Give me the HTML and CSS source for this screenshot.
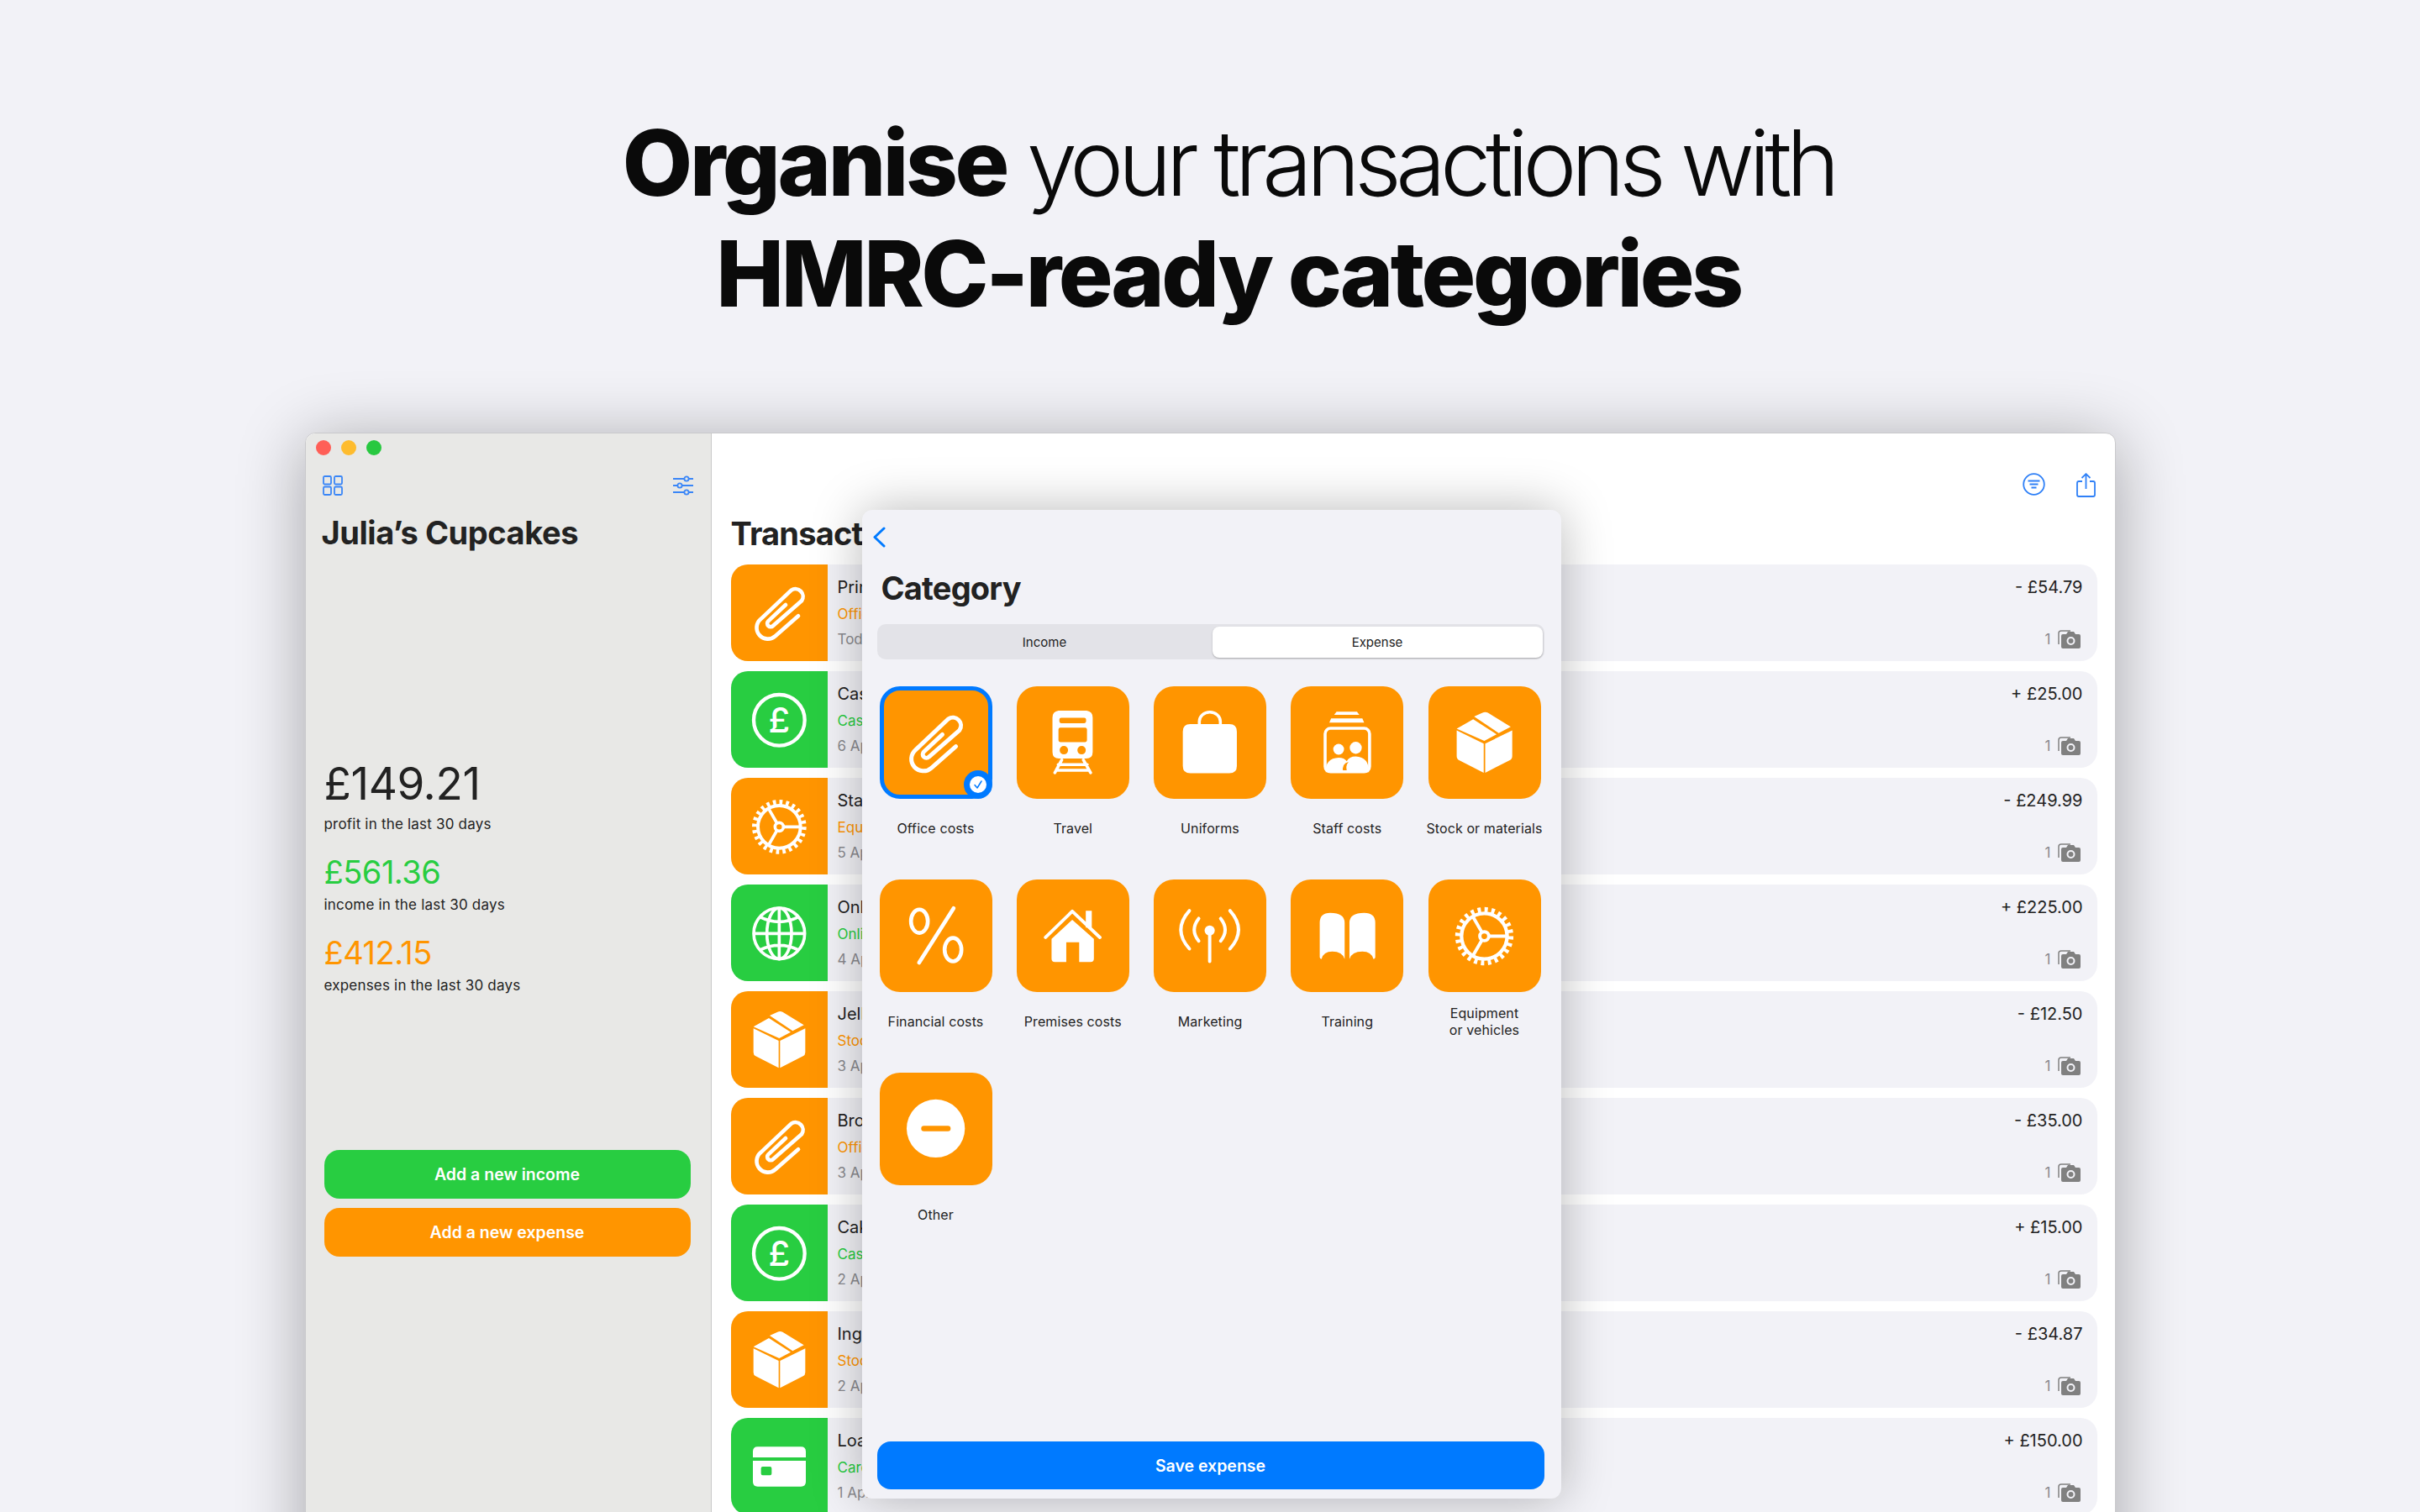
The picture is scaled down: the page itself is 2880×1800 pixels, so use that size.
FILE: index.html
```html
<!DOCTYPE html>
<html lang="en">
  <head>
    <meta charset="UTF-8" />
    <title>Organise your transactions</title>
    <link rel="stylesheet" href="styles.css">
  </head>
  <body>
    <svg class="icon-defs" aria-hidden="true">
      <symbol id="i-clip" viewBox="0 0 345 345">
        <path fill="none" stroke="#fff" stroke-width="14" stroke-linecap="round" stroke-linejoin="round" d="M240 184L158 256A38 38 0 0 1 105 196L215 92A27 27 0 0 1 252 130L150 219A12 12 0 0 1 133 202L195 144" />
      </symbol>
      <symbol id="i-pound" viewBox="0 0 345 345">
        <circle cx="172" cy="175" r="91" fill="none" stroke="#fff" stroke-width="13" />
        <text x="172" y="220" text-anchor="middle" class="icon-glyph">£</text>
      </symbol>
      <symbol id="i-gear" viewBox="0 0 345 345">
        <g fill="none" stroke="#fff">
          <circle cx="172" cy="175" r="76" stroke-width="12" />
          <circle cx="172" cy="175" r="88" stroke-width="18" stroke-dasharray="11 12.04" />
          <circle cx="172" cy="175" r="15" stroke-width="11" />
          <path stroke-width="11" d="M187 175H250M164 162L134 110M164 188L134 240" />
        </g>
      </symbol>
      <symbol id="i-globe" viewBox="0 0 345 345">
        <g fill="none" stroke="#fff" stroke-width="11">
          <circle cx="172" cy="175" r="91" />
          <ellipse cx="172" cy="175" rx="44" ry="91" />
          <path d="M172 84V266M81 175H263M103 116Q172 150 241 116M103 234Q172 200 241 234" />
        </g>
      </symbol>
      <symbol id="i-box" viewBox="0 0 345 345">
        <path fill="#fff" d="M80 133L170 177V274L88 232Q80 228 80 218ZM265 133L175 177V274L257 232Q265 228 265 218ZM80 127L135 96L213 146L172 168ZM138 87L166 74Q175 70 184 74L260 121L220 142Z" />
      </symbol>
      <symbol id="i-card" viewBox="0 0 345 345">
        <path fill="#fff" fill-rule="evenodd" d="M95 103H250Q267 103 267 120V141H78V120Q78 103 95 103ZM78 153H267V228Q267 245 250 245H95Q78 245 78 228ZM113 174Q107 174 107 180V199Q107 205 113 205H139Q145 205 145 199V180Q145 174 139 174Z" />
      </symbol>
      <symbol id="i-train" viewBox="0 0 345 345">
        <path fill="#fff" fill-rule="evenodd" d="M125 67H219Q239 70 239 90V205Q239 227 217 227H127Q105 227 105 205V90Q105 70 125 67ZM134 91Q128 91 128 97V103Q128 109 134 109H211Q217 109 217 103V97Q217 91 211 91ZM131 124Q125 124 125 130V166Q125 172 131 172H214Q220 172 220 166V130Q220 124 214 124ZM143 185A14 14 0 1 0 143 213A14 14 0 1 0 143 185ZM202 185A14 14 0 1 0 202 213A14 14 0 1 0 202 185Z" />
        <path fill="none" stroke="#fff" stroke-width="10" stroke-linecap="round" d="M136 231L113 274M208 231L232 274M124 247H221M117 266H228" />
      </symbol>
      <symbol id="i-bag" viewBox="0 0 345 345">
        <path fill="#fff" d="M108 112H238Q263 112 263 137V251Q263 276 238 276H108Q83 276 83 251V137Q83 112 108 112Z" />
        <path fill="none" stroke="#fff" stroke-width="10" d="M138 115V103A35 31 0 0 1 208 103V115" />
      </symbol>
      <symbol id="i-staff" viewBox="0 0 345 345">
        <path fill="#fff" d="M136 71H204L212 81H128ZM118 93H222L228 107H112Z" />
        <rect x="98" y="126" width="148" height="145" rx="18" fill="none" stroke="#fff" stroke-width="10" />
        <circle cx="143" cy="196" r="18" fill="#fff" />
        <circle cx="200" cy="191" r="20" fill="#fff" />
        <path fill="#fff" d="M100 272Q98 226 143 224Q162 224 170 236Q178 220 200 220Q244 222 244 272H172Q164 252 176 238Q152 244 158 272Z" />
      </symbol>
      <symbol id="i-percent" viewBox="0 0 345 345">
        <g fill="none" stroke="#fff" stroke-width="13" stroke-linecap="round">
          <ellipse cx="118" cy="125" rx="28" ry="39" />
          <ellipse cx="230" cy="220" rx="28" ry="39" />
          <path d="M232 82L117 263" />
        </g>
      </symbol>
      <symbol id="i-house" viewBox="0 0 345 345">
        <path fill="#fff" d="M216 90H236V146H216ZM171 120L243 184V250Q243 261 232 261H194V195H151V261H113Q102 261 102 250V184Z" />
        <path fill="none" stroke="#fff" stroke-width="11" stroke-linecap="round" stroke-linejoin="round" d="M82 179L171 92L263 179" />
      </symbol>
      <symbol id="i-antenna" viewBox="0 0 345 345">
        <circle cx="172.500" cy="156" r="17" fill="#fff" />
        <path fill="none" stroke="#fff" stroke-width="11" stroke-linecap="round" d="M172.500 160V259M136 116Q106 154 136 191M209 116Q239 154 209 191M105 90Q48 154 105 217M240 90Q297 154 240 217" />
      </symbol>
      <symbol id="i-book" viewBox="0 0 345 345">
        <path fill="#fff" d="M80 130Q80 97 115 97Q163 97 163 130V251Q155 226 122 226Q92 226 86 251Q80 251 80 245ZM265 130Q265 97 228 97Q179 97 179 130V251Q187 226 222 226Q252 226 259 251Q265 251 265 245Z" />
      </symbol>
      <symbol id="i-minus" viewBox="0 0 345 345">
        <circle cx="172.500" cy="172" r="97" fill="#fff" />
        <rect x="124" y="163" width="98" height="18" rx="9" fill="#ff9500" />
      </symbol>
      <symbol id="i-camera" viewBox="0 0 27 22">
        <path fill="none" stroke="#808080" stroke-width="1.500" d="M1 17V4Q1 1 4 1H15" />
        <path fill="#808080" fill-rule="evenodd" d="M6 5H10L12 2H19L21 5H25Q27 5 27 7V20Q27 22 25 22H6Q4 22 4 20V7Q4 5 6 5ZM15.500 8A5 5 0 1 0 15.500 18A5 5 0 1 0 15.500 8ZM15.500 10A3 3 0 1 1 15.500 16A3 3 0 1 1 15.500 10Z" />
      </symbol>
    </svg>

    <h1 class="headline">
      <b>Organise</b> your transactions with<br />
      <b>HMRC-ready categories</b>
    </h1>

    <div class="window">
      <aside class="sidebar">
        <div class="lights">
          <span class="light light-red"></span>
          <span class="light light-yellow"></span>
          <span class="light light-green"></span>
        </div>
        <div class="side-tools">
          <svg width="24" height="24" viewBox="0 0 24 24" fill="none" stroke="#3a86f7" stroke-width="1.800">
            <rect x="1" y="1" width="9" height="9.500" rx="1.500" />
            <rect x="14" y="1" width="9" height="9.500" rx="1.500" />
            <rect x="1" y="13.500" width="9" height="9.500" rx="1.500" />
            <rect x="14" y="13.500" width="9" height="9.500" rx="1.500" />
          </svg>
          <svg width="26" height="24" viewBox="0 0 26 24" fill="none" stroke="#3a86f7" stroke-width="1.800">
            <path d="M1 4H14M20 4H25M1 12H6M12 12H25M1 20H14M20 20H25" />
            <circle cx="17" cy="4" r="2.600" />
            <circle cx="9" cy="12" r="2.600" />
            <circle cx="17" cy="20" r="2.600" />
          </svg>
        </div>
        <h2 class="side-title">Julia’s Cupcakes</h2>

        <div class="summary">
          <p class="sum-big">£149.21</p>
          <p class="sum-note">profit in the last 30 days</p>
          <p class="sum-mid sum-income">£561.36</p>
          <p class="sum-note">income in the last 30 days</p>
          <p class="sum-mid sum-expense">£412.15</p>
          <p class="sum-note">expenses in the last 30 days</p>
        </div>

        <div class="side-buttons">
          <button class="side-btn btn-income">Add a new income</button>
          <button class="side-btn btn-expense">Add a new expense</button>
        </div>
      </aside>

      <main class="content">
        <div class="content-tools">
          <svg width="27" height="27" viewBox="0 0 27 27" fill="none" stroke="#2f80f7" stroke-width="1.800">
            <circle cx="13.500" cy="13.500" r="12.300" />
            <path d="M6.500 9.500H20.500M8.500 13.500H18.500M10.500 17.500H16.500" />
          </svg>
          <svg width="23" height="29" viewBox="0 0 23 29" fill="none" stroke="#2f80f7" stroke-width="1.800">
            <path d="M7 10H3Q1 10 1 12V26Q1 28 3 28H20Q22 28 22 26V12Q22 10 20 10H16" />
            <path d="M11.500 19V1.500M6.500 6L11.500 1.200L16.500 6" />
          </svg>
        </div>
        <h2 class="content-title">Transactions</h2>

        <div class="rows">
          <div class="row">
            <div class="row-icon orange"><svg><use href="#i-clip" /></svg></div>
            <div class="row-text">
              <span class="row-name">Printer paper</span>
              <span class="row-cat cat-orange">Office costs</span>
              <span class="row-date">Today</span>
            </div>
            <div class="row-side">
              <span class="row-amount">- £54.79</span>
              <span class="row-photos">1 <svg><use href="#i-camera" /></svg></span>
            </div>
          </div>
          <div class="row">
            <div class="row-icon green"><svg><use href="#i-pound" /></svg></div>
            <div class="row-text">
              <span class="row-name">Cash sale</span>
              <span class="row-cat cat-green">Cash</span>
              <span class="row-date">6 Apr 2021</span>
            </div>
            <div class="row-side">
              <span class="row-amount">+ £25.00</span>
              <span class="row-photos">1 <svg><use href="#i-camera" /></svg></span>
            </div>
          </div>
          <div class="row">
            <div class="row-icon orange"><svg><use href="#i-gear" /></svg></div>
            <div class="row-text">
              <span class="row-name">Stand mixer</span>
              <span class="row-cat cat-orange">Equipment or vehicles</span>
              <span class="row-date">5 Apr 2021</span>
            </div>
            <div class="row-side">
              <span class="row-amount">- £249.99</span>
              <span class="row-photos">1 <svg><use href="#i-camera" /></svg></span>
            </div>
          </div>
          <div class="row">
            <div class="row-icon green"><svg><use href="#i-globe" /></svg></div>
            <div class="row-text">
              <span class="row-name">Online orders</span>
              <span class="row-cat cat-green">Online</span>
              <span class="row-date">4 Apr 2021</span>
            </div>
            <div class="row-side">
              <span class="row-amount">+ £225.00</span>
              <span class="row-photos">1 <svg><use href="#i-camera" /></svg></span>
            </div>
          </div>
          <div class="row">
            <div class="row-icon orange"><svg><use href="#i-box" /></svg></div>
            <div class="row-text">
              <span class="row-name">Jelly</span>
              <span class="row-cat cat-orange">Stock or materials</span>
              <span class="row-date">3 Apr 2021</span>
            </div>
            <div class="row-side">
              <span class="row-amount">- £12.50</span>
              <span class="row-photos">1 <svg><use href="#i-camera" /></svg></span>
            </div>
          </div>
          <div class="row">
            <div class="row-icon orange"><svg><use href="#i-clip" /></svg></div>
            <div class="row-text">
              <span class="row-name">Brochures</span>
              <span class="row-cat cat-orange">Office costs</span>
              <span class="row-date">3 Apr 2021</span>
            </div>
            <div class="row-side">
              <span class="row-amount">- £35.00</span>
              <span class="row-photos">1 <svg><use href="#i-camera" /></svg></span>
            </div>
          </div>
          <div class="row">
            <div class="row-icon green"><svg><use href="#i-pound" /></svg></div>
            <div class="row-text">
              <span class="row-name">Cake sale</span>
              <span class="row-cat cat-green">Cash</span>
              <span class="row-date">2 Apr 2021</span>
            </div>
            <div class="row-side">
              <span class="row-amount">+ £15.00</span>
              <span class="row-photos">1 <svg><use href="#i-camera" /></svg></span>
            </div>
          </div>
          <div class="row">
            <div class="row-icon orange"><svg><use href="#i-box" /></svg></div>
            <div class="row-text">
              <span class="row-name">Ingredients</span>
              <span class="row-cat cat-orange">Stock or materials</span>
              <span class="row-date">2 Apr 2021</span>
            </div>
            <div class="row-side">
              <span class="row-amount">- £34.87</span>
              <span class="row-photos">1 <svg><use href="#i-camera" /></svg></span>
            </div>
          </div>
          <div class="row">
            <div class="row-icon green"><svg><use href="#i-card" /></svg></div>
            <div class="row-text">
              <span class="row-name">Loaf order</span>
              <span class="row-cat cat-green">Card</span>
              <span class="row-date">1 Apr 2021</span>
            </div>
            <div class="row-side">
              <span class="row-amount">+ £150.00</span>
              <span class="row-photos">1 <svg><use href="#i-camera" /></svg></span>
            </div>
          </div>
        </div>
      </main>

      <section class="sheet">
        <svg class="sheet-back" width="16" height="25" viewBox="0 0 16 25" fill="none" stroke="#007aff" stroke-width="3" stroke-linecap="round" stroke-linejoin="round">
          <path d="M14 2L3 12.500L14 23" />
        </svg>
        <h2 class="sheet-title">Category</h2>

        <div class="segment">
          <span class="segment-item">Income</span>
          <span class="segment-item segment-on">Expense</span>
        </div>

        <div class="tiles">
          <div class="tile-cell">
            <div class="tile tile-selected">
              <svg><use href="#i-clip" /></svg>
              <span class="tile-check">
                <svg viewBox="0 0 20 20" fill="none" stroke="#007aff" stroke-width="1.500" stroke-linecap="round" stroke-linejoin="round"><path d="M6 10.500L9 14L14 6" /></svg>
              </span>
            </div>
            <span class="tile-label">Office costs</span>
          </div>
          <div class="tile-cell">
            <div class="tile"><svg><use href="#i-train" /></svg></div>
            <span class="tile-label">Travel</span>
          </div>
          <div class="tile-cell">
            <div class="tile"><svg><use href="#i-bag" /></svg></div>
            <span class="tile-label">Uniforms</span>
          </div>
          <div class="tile-cell">
            <div class="tile"><svg><use href="#i-staff" /></svg></div>
            <span class="tile-label">Staff costs</span>
          </div>
          <div class="tile-cell">
            <div class="tile"><svg><use href="#i-box" /></svg></div>
            <span class="tile-label">Stock or materials</span>
          </div>
          <div class="tile-cell">
            <div class="tile"><svg><use href="#i-percent" /></svg></div>
            <span class="tile-label">Financial costs</span>
          </div>
          <div class="tile-cell">
            <div class="tile"><svg><use href="#i-house" /></svg></div>
            <span class="tile-label">Premises costs</span>
          </div>
          <div class="tile-cell">
            <div class="tile"><svg><use href="#i-antenna" /></svg></div>
            <span class="tile-label">Marketing</span>
          </div>
          <div class="tile-cell">
            <div class="tile"><svg><use href="#i-book" /></svg></div>
            <span class="tile-label">Training</span>
          </div>
          <div class="tile-cell">
            <div class="tile"><svg><use href="#i-gear" /></svg></div>
            <span class="tile-label">Equipment<br />or vehicles</span>
          </div>
          <div class="tile-cell">
            <div class="tile"><svg><use href="#i-minus" /></svg></div>
            <span class="tile-label">Other</span>
          </div>
        </div>

        <button class="save-btn">Save expense</button>
      </section>
    </div>
  </body>
</html>
```

FILE: styles.css
```css
* {
  box-sizing: border-box;
}

html,
body {
  height: 100%;
}

body {
  margin: 0;
  overflow: hidden;
  background: #f2f2f7;
  color: #222;
  font-family: Inter, "Liberation Sans", sans-serif;
}

p,
h1,
h2 {
  margin: 0;
}

.icon-defs {
  position: absolute;
  width: 0;
  height: 0;
}

.icon-glyph {
  fill: #fff;
  font-family: Inter, sans-serif;
  font-size: 124px;
  font-weight: 500;
}

/* headline */
.headline {
  height: 515px;
  padding: 128px 0 0 44px;
  text-align: center;
  color: #0a0a0a;
  font-size: 108px;
  font-weight: 300;
  line-height: 132px;
  letter-spacing: -6.5px;
}

.headline b {
  font-weight: 800;
  letter-spacing: -3.4px;
}

/* app window */
.window {
  position: relative;
  display: flex;
  width: 2155px;
  height: 1400px;
  margin: 0 auto;
  background: #fff;
  border: 1px solid #c9c9cc;
  border-radius: 12px 12px 0 0;
  box-shadow: 0 10px 80px rgba(0, 0, 0, 0.32);
}

/* sidebar */
.sidebar {
  display: flex;
  flex-direction: column;
  flex: none;
  width: 483px;
  padding: 8px 24px 0 22px;
  background: #e8e8e6;
  border-right: 1px solid #c9c9c9;
  border-top-left-radius: 12px;
}

.lights {
  display: flex;
  gap: 12px;
  margin-left: -10px;
}

.light {
  width: 18px;
  height: 18px;
  border-radius: 50%;
}

.light-red {
  background: #ff5f57;
}

.light-yellow {
  background: #febc2e;
}

.light-green {
  background: #28c840;
}

.side-tools {
  display: flex;
  justify-content: space-between;
  margin: 24px -4px 0 -2px;
}

.side-title,
.content-title,
.sheet-title {
  font-size: 38px;
  font-weight: 700;
  line-height: 46px;
  letter-spacing: -0.8px;
  white-space: nowrap;
}

.side-title {
  margin: 21px 0 0 -3px;
  letter-spacing: -0.45px;
}

.summary {
  margin-top: 245px;
}

.sum-big {
  font-size: 53px;
  line-height: 62px;
  letter-spacing: -0.4px;
}

.sum-big + .sum-note {
  margin-top: 6px;
}

.sum-mid {
  margin-top: 23px;
  font-size: 38px;
  line-height: 46px;
  letter-spacing: -0.5px;
}

.sum-income {
  color: #28cd41;
}

.sum-expense {
  color: #ff9500;
}

.sum-note {
  margin-top: 5px;
  font-size: 17px;
  line-height: 22px;
  letter-spacing: 0.2px;
}

.side-buttons {
  display: flex;
  flex-direction: column;
  gap: 11px;
  margin-top: 185px;
}

.side-btn,
.save-btn {
  border: 0;
  color: #fff;
  font-family: inherit;
  font-size: 19.500px;
  font-weight: 600;
}

.side-btn {
  height: 58px;
  border-radius: 18px;
}

.btn-income {
  background: #28cd41;
}

.btn-expense {
  background: #ff9500;
}

/* transactions */
.content {
  flex: 1;
  min-width: 0;
  padding: 0 21px 0 23px;
}

.content-tools {
  display: flex;
  justify-content: flex-end;
  gap: 37px;
  padding: 47px 2px 0 0;
}

.content-title {
  margin-top: 20px;
}

.rows {
  display: flex;
  flex-direction: column;
  gap: 12px;
  margin-top: 14px;
}

.row {
  display: flex;
  flex: none;
  height: 115px;
  background: #f2f2f7;
  border-radius: 20px;
  overflow: hidden;
}

.row-icon {
  flex: none;
  width: 115px;
  height: 115px;
}

.row-icon svg {
  display: block;
  width: 100%;
  height: 100%;
}

.orange {
  background: #ff9500;
}

.green {
  background: #28cd41;
}

.row-text {
  display: flex;
  flex-direction: column;
  flex: 1;
  padding: 12px 0 0 12px;
}

.row-name,
.row-cat,
.row-date {
  line-height: 30px;
  white-space: nowrap;
}

.row-name {
  font-size: 20px;
}

.row-cat,
.row-date {
  font-size: 17px;
}

.row-cat {
  margin-top: 2px;
}

.cat-orange {
  color: #ff9500;
}

.cat-green {
  color: #28cd41;
}

.row-date {
  color: #8a8a8e;
}

.row-side {
  display: flex;
  flex-direction: column;
  justify-content: space-between;
  align-items: flex-end;
  padding: 12px 17px 15px 0;
}

.row-amount {
  font-size: 20px;
  line-height: 30px;
}

.row-photos {
  display: flex;
  align-items: center;
  gap: 8px;
  margin-right: 3px;
  color: #8a8a8e;
  font-size: 17px;
  line-height: 22px;
}

.row-photos svg {
  width: 27px;
  height: 22px;
}

/* category sheet */
.sheet {
  position: absolute;
  top: 91px;
  left: 662px;
  display: flex;
  flex-direction: column;
  width: 832px;
  height: 1177px;
  padding: 0 20px 11px 18px;
  background: #f2f2f7;
  border-radius: 12px;
  box-shadow: 0 0 60px rgba(0, 0, 0, 0.28);
}

.sheet-back {
  flex: none;
  margin: 20px 0 0 -6px;
}

.sheet-title {
  margin: 25px 0 0 5px;
}

.segment {
  display: flex;
  flex: none;
  height: 42px;
  margin-top: 20px;
  padding: 3px 2px 2px 0;
  background: #e3e3e8;
  border-radius: 10px;
}

.segment-item {
  display: flex;
  flex: 1;
  align-items: center;
  justify-content: center;
  font-size: 15px;
  line-height: 20px;
}

.segment-on {
  flex: none;
  width: 393px;
  background: #fff;
  border-radius: 8px;
  box-shadow: 0 1px 2px rgba(0, 0, 0, 0.25);
}

.tiles {
  display: grid;
  grid-template-columns: repeat(5, 134px);
  column-gap: 29.250px;
  row-gap: 26px;
  margin: 32px 0 0 3px;
}

.tile-cell {
  display: flex;
  flex-direction: column;
  align-items: center;
}

.tile {
  position: relative;
  display: flex;
  align-items: center;
  justify-content: center;
  width: 134px;
  height: 134px;
  background: #ff9500;
  border-radius: 24px;
}

.tile > svg {
  display: block;
  width: 92%;
  height: 92%;
}

.tile-selected {
  border: 5px solid #007aff;
}

.tile-selected > svg {
  flex: none;
  width: 123px;
  height: 123px;
}

.tile-check {
  position: absolute;
  right: -5px;
  bottom: -5px;
  display: flex;
  align-items: center;
  justify-content: center;
  width: 34px;
  height: 34px;
  background: #fff;
  border: 7px solid #007aff;
  border-radius: 50%;
}

.tile-check svg {
  width: 20px;
  height: 20px;
}

.tile-label {
  display: flex;
  align-items: center;
  height: 70px;
  text-align: center;
  font-size: 16px;
  line-height: 20px;
  letter-spacing: 0.1px;
  white-space: nowrap;
}

.save-btn {
  flex: none;
  height: 57px;
  margin-top: auto;
  background: #007aff;
  border-radius: 16px;
}
```
